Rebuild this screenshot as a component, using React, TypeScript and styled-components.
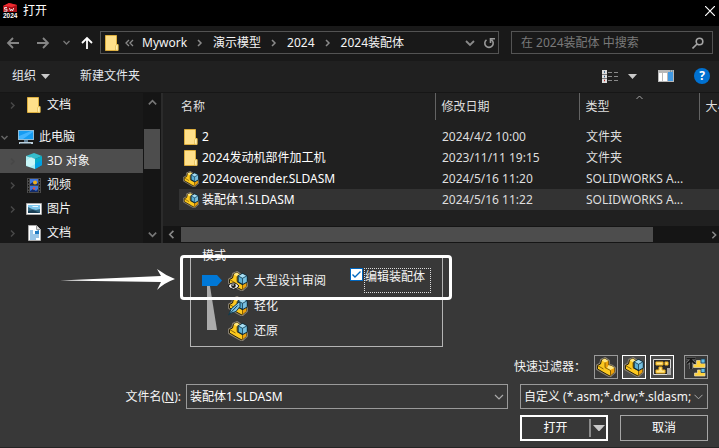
import React, { useState } from "react";
import styled, { createGlobalStyle } from "styled-components";

const Global = createGlobalStyle`
  * { box-sizing: border-box; }
  body { margin: 0; background: #383838; }
  body, button, input, select {
    font-family: "Noto Sans", "Noto Sans CJK SC", sans-serif;
    font-size: 12px;
    line-height: 16px;
    color: #f4f4f4;
  }
  button { background: none; border: 0; padding: 0; }
  svg { display: block; flex: none; }
`;

const Dialog = styled.main`
  display: flex;
  flex-direction: column;
  min-height: 100vh;
  overflow: hidden;
  background: #383838;
  border-bottom: 1px solid #242424;
`;

const TitleBar = styled.header`
  display: flex;
  align-items: center;
  gap: 5px;
  height: 26px;
  padding: 0 4px 5px 2px;
  background: #000;
`;
const Title = styled.h1`
  flex: 1;
  margin: 0;
  font-size: 12px;
  font-weight: 400;
  color: #fff;
`;

const NavBar = styled.nav`
  display: flex;
  align-items: center;
  height: 35px;
  padding: 0 6px 2px;
  background: #191919;
`;
const IconButton = styled.button<{ $w?: number; $h?: number }>`
  display: flex;
  flex: none;
  align-items: center;
  justify-content: center;
  width: ${(p) => p.$w ?? 16}px;
  height: ${(p) => p.$h ?? 20}px;
`;
const NavButtons = styled.div`
  display: flex;
  flex: none;
  align-items: center;
  width: 94px;
`;
const AddressBar = styled.div`
  display: flex;
  flex: 1;
  align-items: center;
  min-width: 0;
  height: 23px;
  padding: 0 0 0 4px;
  border: 1px solid #535353;
`;
const Crumbs = styled.div`
  display: flex;
  flex: 1;
  align-items: center;
  min-width: 0;
  white-space: nowrap;
`;
const Crumb = styled.button`
  color: #f4f4f4;
`;
const SearchBox = styled.label`
  display: flex;
  align-items: center;
  width: 202px;
  height: 23px;
  margin-left: 12px;
  padding: 0 8px 0 9px;
  border: 1px solid #535353;
`;
const SearchInput = styled.input`
  flex: 1;
  min-width: 0;
  padding: 0;
  border: 0;
  outline: 0;
  background: transparent;
  &::placeholder { color: #797979; opacity: 1; }
`;

const Toolbar = styled.div`
  display: flex;
  align-items: center;
  height: 32px;
  padding: 0 8px 1px 12px;
  border-bottom: 1px solid #161616;
  background: #202020;
`;
const ToolButton = styled.button`
  display: flex;
  align-items: center;
  gap: 5px;
  margin-right: 30px;
  color: #e4e8ee;
`;
const Spacer = styled.div`
  flex: 1;
`;

const Browser = styled.div`
  display: grid;
  grid-template-columns: 143px 20px minmax(0, 1fr);
`;
const Tree = styled.nav`
  height: 150px;
  overflow: hidden;
  background: #191919;
`;
const TreeRow = styled.button<{ $selected?: boolean; $root?: boolean; $space?: boolean }>`
  display: flex;
  align-items: center;
  gap: 4px;
  width: 100%;
  height: 24px;
  padding-left: ${(p) => (p.$root ? 0 : 8)}px;
  margin-bottom: ${(p) => (p.$space ? 8 : 0)}px;
  color: #f4f4f4;
  background: ${(p) => (p.$selected ? "#4d4d4d" : "transparent")};
`;
const TreeIcon = styled.span<{ $root?: boolean }>`
  display: flex;
  justify-content: center;
  width: 18px;
  margin-left: 4px;
`;
const VScroll = styled.div`
  display: grid;
  grid-template-rows: 36px 40px 1fr;
  padding: 0 2px 0 1px;
  background: #151515;
  border-right: 2px solid #2b2b2b;
`;
const HScroll = styled.div`
  display: grid;
  grid-template-columns: 18px minmax(0, 472fr) minmax(0, 66fr);
  height: 17px;
  padding: 1px 0;
  background: #151515;
`;
const Thumb = styled.div`
  background: #4d4d4d;
`;
const ScrollEnd = styled.div<{ $align?: string; $items?: string }>`
  display: flex;
  align-items: ${(p) => p.$items ?? "center"};
  justify-content: ${(p) => p.$align ?? "center"};
`;

const Files = styled.section`
  display: flex;
  flex-direction: column;
  justify-content: space-between;
  min-width: 0;
  height: 150px;
  overflow: hidden;
  background: #202020;
`;
const TableWrap = styled.div`
  padding-left: 16px;
`;
const Table = styled.table`
  width: 100%;
  table-layout: fixed;
  border-collapse: collapse;
`;
const Th = styled.th<{ $w?: number }>`
  position: relative;
  width: ${(p) => (p.$w ? `${p.$w}px` : "auto")};
  height: 27px;
  padding: 0 0 0 6px;
  border-right: 1px solid #636363;
  overflow: hidden;
  font-weight: 400;
  text-align: left;
  white-space: nowrap;
  color: #dfdfdf;
  &:first-child { padding-left: 2px; }
  &:last-child { border-right: 0; }
`;
const SortMark = styled.span`
  position: absolute;
  top: 0;
  left: calc(50% - 4px);
`;
const Row = styled.tr<{ $selected?: boolean }>`
  background: ${(p) => (p.$selected ? "#333" : "transparent")};
`;
const Td = styled.td`
  height: 21px;
  padding: 0 0 0 6px;
  overflow: hidden;
  white-space: nowrap;
  color: #dedede;
  &:first-child { padding-left: 3px; color: #fff; }
`;
const TableGap = styled.div`
  height: 6px;
`;
const FileName = styled.span`
  display: flex;
  align-items: center;
  gap: 3px;
`;
const FileIcon = styled.span`
  display: flex;
  justify-content: center;
  width: 17px;
`;

const Options = styled.form`
  display: flex;
  flex-direction: column;
  padding: 5px 11px 6px 0;
`;
const ModeArea = styled.div`
  position: relative;
  width: 253px;
  margin-left: 190px;
`;
const ModeGroup = styled.fieldset`
  display: grid;
  grid-template-columns: 26px 1fr auto;
  grid-template-rows: repeat(3, 25px);
  margin: 0;
  padding: 4px 11px 3px;
  border: 1px solid #b4b4b4;
`;
const Legend = styled.legend`
  padding: 0;
  line-height: 16px;
`;
const SliderCell = styled.div`
  position: relative;
  grid-row: 1 / span 3;
`;
const Slider = styled.input`
  position: absolute;
  inset: 0;
  width: 20px;
  height: 100%;
  margin: 0;
  opacity: 0;
  writing-mode: vertical-lr;
`;
const ModeButton = styled.button`
  display: flex;
  grid-column: 2;
  align-items: center;
  gap: 6px;
  white-space: nowrap;
  color: #f4f4f4;
`;
const CheckLabel = styled.label`
  display: flex;
  gap: 1px;
  height: 25px;
`;
const CheckBox = styled.input`
  appearance: none;
  width: 13px;
  height: 13px;
  margin: 0;
  border: 1px solid #0067c0;
  background: #fff;
  &:checked {
    background: #fff url("data:image/svg+xml,%3Csvg xmlns='http://www.w3.org/2000/svg' viewBox='0 0 11 11'%3E%3Cpath d='M1.5 5.5 4 8 9.5 2.5' fill='none' stroke='%230067c0' stroke-width='1.4'/%3E%3C/svg%3E");
  }
`;
const CheckText = styled.span`
  width: 67px;
  border: 1px dotted #ddd;
`;
const Highlight = styled.div`
  position: absolute;
  top: 7px;
  left: -10px;
  width: 272px;
  height: 45px;
  border: 3px solid #fff;
  border-radius: 4px;
  pointer-events: none;
`;
const Pointer = styled.svg`
  position: absolute;
  top: 20px;
  left: -130px;
  pointer-events: none;
`;

const FilterRow = styled.div`
  display: flex;
  align-items: center;
  justify-content: flex-end;
  gap: 4px;
  margin-top: 8px;
`;
const FilterLabel = styled.span`
  margin-right: 4px;
`;
const FilterButton = styled.button<{ $on?: boolean; $apart?: boolean }>`
  display: flex;
  align-items: center;
  justify-content: center;
  width: 24px;
  height: 24px;
  margin-left: ${(p) => (p.$apart ? 6 : 0)}px;
  border: 1px solid ${(p) => (p.$on ? "#fff" : "#9a9a9a")};
  background: ${(p) => (p.$on ? "#4a4a4a" : "#383838")};
`;
const NameRow = styled.div`
  display: grid;
  grid-template-columns: 186px minmax(0, 1fr) 188px;
  margin-top: 5px;
  align-items: center;
`;
const NameLabel = styled.label`
  padding-right: 5px;
  text-align: right;
`;
const Combo = styled.div`
  display: flex;
  align-items: center;
  height: 25px;
  margin-right: 12px;
  padding: 0 4px 0 3px;
  border: 1px solid #9a9a9a;
`;
const NameInput = styled.input`
  flex: 1;
  min-width: 0;
  padding: 0;
  border: 0;
  outline: 0;
  background: transparent;
  color: #fff;
`;
const TypeSelect = styled.select`
  appearance: none;
  width: 100%;
  height: 25px;
  padding: 0 12px 0 3px;
  border: 1px solid #9a9a9a;
  border-radius: 0;
  background: #383838 url("data:image/svg+xml,%3Csvg xmlns='http://www.w3.org/2000/svg' width='9' height='6'%3E%3Cpath d='M.5 .8 4.5 4.8 8.5 .8' fill='none' stroke='%23aaa'/%3E%3C/svg%3E") no-repeat right 4px center;
`;
const Actions = styled.div`
  display: flex;
  justify-content: flex-end;
  gap: 12px;
  margin-top: 6px;
`;
const Split = styled.div`
  display: flex;
  align-items: center;
  width: 88px;
  height: 26px;
  border: 2px solid #fff;
`;
const OpenButton = styled.button`
  flex: 1;
  height: 18px;
  border-right: 2px solid #8a8a8a;
  color: #fff;
`;
const CancelButton = styled.button`
  width: 88px;
  height: 26px;
  border: 1px solid #a6a6a6;
  color: #fff;
`;

type Dir = "left" | "right" | "up" | "down";
const chevrons: Record<Dir, string> = {
  left: "M7 2 3 6l4 4",
  right: "M4 2l4 4-4 4",
  up: "M2 8l4-4 4 4",
  down: "M2 4l4 4 4-4",
};
const Chevron = ({ dir, color = "#8a8a8a", size = 12, weight = 1.8 }: { dir: Dir; color?: string; size?: number; weight?: number }) => (
  <svg width={size} height={size} viewBox="0 0 12 12" fill="none" stroke={color} strokeWidth={weight}>
    <path d={chevrons[dir]} />
  </svg>
);
const Separator = () => (
  <svg width="26" height="12" viewBox="0 0 26 12" fill="none" stroke="#8a8a8a" strokeWidth="1.5">
    <path d="M11 3l3 3-3 3" />
  </svg>
);
const Caret = ({ w = 9 }: { w?: number }) => (
  <svg width={w} height={(w + 1) / 2} viewBox="0 0 10 5" preserveAspectRatio="none"><path d="M0 0h10L5 5z" fill="#c9c9c9" /></svg>
);
const NavArrow = ({ turn, color }: { turn: number; color: string }) => (
  <svg width="14" height="14" viewBox="0 0 14 14" fill="none" stroke={color} strokeWidth="1.8">
    <path transform={`rotate(${turn} 7 7)`} d="M13 7H2M7 2 2 7l5 5" />
  </svg>
);
const Folder = () => (
  <svg width="14" height="16" viewBox="0 0 14 16">
    <path d="M.5.5h11v9h1.500v6H.5z" fill="#ffe08a" stroke="#dcae3e" />
    <path d="M10.500 15v-4l1-1.500H13v6z" fill="#fff0b2" stroke="#e3b94e" strokeWidth=".7" />
  </svg>
);
const Logo = () => (
  <svg width="16" height="16" viewBox="0 0 16 16">
    <path d="M1 3 7 0l8 2v7H1z" fill="#a80f16" />
    <path d="M1 3 7 0l8 2-5 2z" fill="#ee2a30" />
    <path d="M5 4.500H2.500v1.700H5v2H2M7.500 5l1 3 1-2 1 2 1.200-3" fill="none" stroke="#eee" strokeWidth=".9" />
    <path d="M0 9h16v7H0z" fill="#000" />
    <text x="1" y="15" fontSize="6.500" fontWeight="700" fontFamily="Liberation Sans" fill="#fff">2024</text>
  </svg>
);
const Computer = () => (
  <svg width="16" height="16" viewBox="0 0 16 16">
    <path d="M0 1h16v10H0z" fill="#8fbdd9" /><path d="M1 2h14v8H1z" fill="#159cf2" />
    <path d="M1 10V7l12-5h2v1L5 10z" fill="#42b5ff" />
    <path d="M6 11h4v2H6z" fill="#5f7f97" /><path d="M1 13h14v2H1z" fill="#bdd0dc" /><path d="M2 14h11v1H2z" fill="#667984" />
  </svg>
);
const Cube = () => (
  <svg width="16" height="16" viewBox="0 0 16 16">
    <path d="M8 0l8 3-7 3-9-3z" fill="#35bdcc" /><path d="M0 3l9 3v10l-9-3z" fill="#a6edf2" />
    <path d="M9 6l7-3v9l-7 4z" fill="#07aec8" /><path d="M0 8l5-4 4 2v5l-5 3-4-2z" fill="#d8fafa" opacity=".7" />
    <path d="M9 11l7-4v5l-7 4z" fill="#00a0e4" />
  </svg>
);
const Film = () => (
  <svg width="14" height="15" viewBox="0 0 14 15">
    <path d="M0 0h14v15H0z" fill="#4b4b4b" />
    <path d="M1.500 1v14M12.500 1v14" stroke="#111" strokeDasharray="1.500 1.500" />
    <path d="M3 1h8v6H3zM3 8h8v6H3z" fill="#3f76df" />
    <path d="M3 6l3-2 3 2 2-1v2H3zM3 13l3-2 3 2 2-2v3H3z" fill="#152c67" />
    <circle cx="8" cy="4.500" r="2" fill="#f0af1a" /><circle cx="7" cy="10.500" r="1.200" fill="#df4f42" />
  </svg>
);
const Picture = () => (
  <svg width="16" height="12" viewBox="0 0 16 12">
    <path d="M.5.5h15v11H.5z" fill="#fff" stroke="#aaa" /><path d="M2 2h12v8H2z" fill="#7fc8ee" />
    <path d="M2 4l4 2 4 1 4-1v4H2z" fill="#376a84" /><path d="M2 8l5-1 7 3H2z" fill="#1b3f55" />
    <path d="M6 3h6v1H7z" fill="#e8f7ff" />
  </svg>
);
const Doc = () => (
  <svg width="13" height="16" viewBox="0 0 13 16">
    <path d="M.5.5h8l4 4v11H.5z" fill="#fff" stroke="#aaa" /><path d="M8.500.5v4h4" fill="#ddd" stroke="#999" />
    <path d="M2 6h3M2 8h3M2 10h9M2 12h9M2 14h6" stroke="#348bd1" /><path d="M7 9V6h1.500l2.500-1v4z" fill="#227bc3" />
  </svg>
);

type Mark = "eye" | "feather";
const partOutline = "M1.500 8.500 4.500 7 5.500 3 9 1.500 12.500 4V8l3.500 1 2.500 2v4L14 19l-3-1.500-9.500-5.500z";
const Part = ({ cube, mark, size = 20 }: { cube?: boolean; mark?: Mark; size?: number }) => (
  <svg width={size} height={size} viewBox="0 0 20 20" strokeLinejoin="round">
    <path d={partOutline} fill="#8d8577" stroke="#8d8577" strokeWidth="2.800" />
    <path d={partOutline} fill="#fcc81f" stroke="#2a2208" strokeWidth="1" />
    <path d="M5.500 3 9 1.500 12.500 4 9 5.500zM12.500 8l3.500 1 2.500 2-4 2-3.500-2z" fill="#ffe680" />
    <path d="M9 5.500 12.500 4v4L11 10.500l-2 1zM14.500 13l4-2v4L14 19z" fill="#eda20c" />
    <path d="M9 5.500v5l5.500 3V18M1.500 8.500l6 3.500" fill="none" stroke="#6b4c00" strokeWidth=".8" />
    {cube && (
      <>
        <path d="M10 5l4.500-2.500L19 5v6l-4.500 2.500L10 11z" fill="#5aaed4" stroke="#0c2937" strokeWidth="1.300" />
        <path d="M10.500 5l4-2.200L18.500 5l-4 2z" fill="#a6dcf1" />
        <path d="M14.500 7.300 18.700 5v5.700L14.500 13z" fill="#77bfdf" />
        <path d="M10.300 5l4.200 2.300L18.700 5M14.500 7.300V13" fill="none" stroke="#143c50" strokeWidth=".8" />
      </>
    )}
    {mark === "eye" && (
      <>
        <path d="M0 15q5.500-6.500 11 0-5.500 6.500-11 0z" fill="#f2f2f2" stroke="#1c1c1c" />
        <circle cx="5.500" cy="14.700" r="2.300" fill="#1c1c1c" /><circle cx="5" cy="14" r=".8" fill="#fff" />
      </>
    )}
    {mark === "feather" && (
      <>
        <path d="M1 18.500 3 13l8-7 1 .5v4l-4 5-4.500 1.500z" fill="#7cc4e6" stroke="#12394b" />
        <path d="M0 19.500 9.500 9.500" stroke="#12394b" />
      </>
    )}
  </svg>
);
const Drawing = () => (
  <svg width="20" height="20" viewBox="0 0 20 20">
    <path d="M1.500 2.500h17v15h-17z" fill="#2b2b2b" stroke="#d8d8d8" />
    <path d="M4 5h7v3H4zM13 5h3v3h-3zM7 10h3v3h3v3H4v-3h3z" fill="#ffe58a" stroke="#f0b31a" />
    <path d="M15 11h4v7h-4z" fill="#a9a9a9" />
  </svg>
);
const TopLevel = () => (
  <svg width="20" height="20" viewBox="0 0 20 20">
    <path d="M.5 1.500h9M1 6.500 5 3l4 3.500M5 3v9" fill="none" stroke="#8a8a8a" strokeWidth="3" />
    <path d="M.5 1.500h9M1 6.500 5 3l4 3.500M5 3v9" fill="none" stroke="#171717" strokeWidth="1.800" />
    <path d="M10.500 3.500h4v3h4.500v4H7.500v-3h3zM11.500 13h3.500v2.500h4V19H8.500v-3h3z" fill="#ffd23b" stroke="#e8dcb8" strokeWidth=".7" />
    <path d="M15 2h4v4h-4zM15 11.500h4v4h-4z" fill="#64bbe6" stroke="#1c4358" strokeWidth=".8" />
  </svg>
);

const places = [
  { name: "文档", icon: <Folder />, space: true },
  { name: "此电脑", icon: <Computer />, root: true },
  { name: "3D 对象", icon: <Cube />, selected: true },
  { name: "视频", icon: <Film /> },
  { name: "图片", icon: <Picture /> },
  { name: "文档", icon: <Doc /> },
];
const files = [
  { name: "2", date: "2024/4/2 10:00", type: "文件夹", folder: true },
  { name: "2024发动机部件加工机", date: "2023/11/11 19:15", type: "文件夹", folder: true },
  { name: "2024overender.SLDASM", date: "2024/5/16 11:20", type: "SOLIDWORKS A..." },
  { name: "装配体1.SLDASM", date: "2024/5/16 11:22", type: "SOLIDWORKS A...", selected: true },
];
const modes: { name: string; mark?: Mark }[] = [
  { name: "大型设计审阅", mark: "eye" },
  { name: "轻化", mark: "feather" },
  { name: "还原" },
];
const crumbs = ["Mywork", "演示模型", "2024", "2024装配体"];

export default function App() {
  const [mode, setMode] = useState(0);
  const [edit, setEdit] = useState(true);
  const [fileName, setFileName] = useState("装配体1.SLDASM");
  return (
    <Dialog>
      <Global />
      <TitleBar>
        <Logo />
        <Title>打开</Title>
        <IconButton $w={10} aria-label="关闭">
          <svg width="10" height="10" viewBox="0 0 10 10" stroke="#fff" strokeWidth="1.200"><path d="M0 0l10 10M10 0 0 10" /></svg>
        </IconButton>
      </TitleBar>
      <NavBar>
        <NavButtons>
          <IconButton $w={14} aria-label="后退"><NavArrow turn={0} color="#858585" /></IconButton>
          <IconButton $w={46} aria-label="前进"><NavArrow turn={180} color="#858585" /></IconButton>
          <IconButton $w={1} aria-label="最近"><Chevron dir="down" size={9} color="#777" /></IconButton>
          <IconButton $w={40} aria-label="上移"><NavArrow turn={90} color="#fff" /></IconButton>
        </NavButtons>
        <AddressBar>
          <Crumbs>
            <Folder />
            <svg width="23" height="12" viewBox="0 0 23 12" fill="none" stroke="#8a8a8a" strokeWidth="1.300"><path d="M10 3 7 6l3 3M14 3l-3 3 3 3" /></svg>
            {crumbs.map((c, i) => (
              <React.Fragment key={c}>
                {i > 0 && <Separator />}
                <Crumb>{c}</Crumb>
              </React.Fragment>
            ))}
          </Crumbs>
          <IconButton $w={20} aria-label="历史"><Chevron dir="down" /></IconButton>
          <IconButton $w={18} aria-label="刷新">
            <svg width="12" height="12" viewBox="0 0 12 12" fill="none" stroke="#999" strokeWidth="1.600"><path d="M3.500 2.800A4.200 4.200 0 1 0 8.500 2.800M7.500 6V1.800H12" /></svg>
          </IconButton>
        </AddressBar>
        <SearchBox>
          <SearchInput aria-label="搜索" placeholder="在 2024装配体 中搜索" />
          <svg width="12" height="12" viewBox="0 0 12 12" fill="none" stroke="#a5a5a5" strokeWidth="1.600"><circle cx="7.500" cy="4.500" r="3.300" /><path d="M5 7 .5 11.500" /></svg>
        </SearchBox>
      </NavBar>
      <Toolbar>
        <ToolButton>组织 <Caret /></ToolButton>
        <ToolButton>新建文件夹</ToolButton>
        <Spacer />
        <IconButton $w={29} aria-label="视图">
          <svg width="17" height="13" viewBox="0 0 17 13">
            <path d="M0 0h5v13H0z" fill="#ddd" /><path d="M0 4.500h5M0 8.500h5" stroke="#777" />
            <path d="M2 2h1M2 6.500h1" stroke="#27577f" strokeWidth="1.500" /><path d="M2 10.500h1" stroke="#b22" strokeWidth="1.500" />
            <path d="M6 2.500h11M6 6.500h11M6 10.500h11" stroke="#8a8a8a" strokeDasharray="4 2" />
          </svg>
        </IconButton>
        <IconButton $w={14} aria-label="更改视图"><Caret /></IconButton>
        <IconButton $w={54} aria-label="预览窗格">
          <svg width="16" height="12" viewBox="0 0 16 12"><path d="M0 0h16v12H0z" fill="#b8b8b8" /><path d="M1 3h3v8H1zM5 3h4v8H5z" fill="#fff" /><path d="M10 2h5v9h-5z" fill="#4199e2" /><path d="M12 1h3" stroke="#31729d" strokeDasharray="1 1" /></svg>
        </IconButton>
        <IconButton $w={18} aria-label="帮助">
          <svg width="16" height="16" viewBox="0 0 16 16"><circle cx="8" cy="8" r="8" fill="#0071d1" /><text x="8" y="12" textAnchor="middle" fontSize="12" fontWeight="700" fontFamily="Noto Sans" fill="#fff">?</text></svg>
        </IconButton>
      </Toolbar>
      <Browser>
        <Tree>
          {places.map((p, i) => (
            <TreeRow key={i} $selected={p.selected} $root={p.root} $space={p.space}>
              <Chevron dir={p.root ? "down" : "right"} size={9} color={p.root ? "#666" : "#474747"} weight={2} />
              <TreeIcon>{p.icon}</TreeIcon>
              {p.name}
            </TreeRow>
          ))}
        </Tree>
        <VScroll>
          <ScrollEnd $items="flex-start"><IconButton $h={18} aria-label="向上滚动"><Chevron dir="up" size={11} color="#777" /></IconButton></ScrollEnd>
          <Thumb />
          <ScrollEnd $items="flex-end"><IconButton $h={18} aria-label="向下滚动"><Chevron dir="down" size={11} color="#777" /></IconButton></ScrollEnd>
        </VScroll>
        <Files>
          <TableWrap>
            <Table>
              <thead>
                <tr>
                  <Th>名称</Th>
                  <Th $w={144}>修改日期</Th>
                  <Th $w={120}>类型<SortMark><Chevron dir="up" size={9} color="#aaa" weight={1.3} /></SortMark></Th>
                  <Th $w={20}>大小</Th>
                </tr>
              </thead>
            </Table>
            <TableGap />
            <Table aria-label="文件">
              <colgroup><col /><col width="144" /><col width="139" /></colgroup>
              <tbody>
                {files.map((f) => (
                  <Row key={f.name} $selected={f.selected}>
                    <Td><FileName><FileIcon>{f.folder ? <Folder /> : <Part cube size={16} />}</FileIcon>{f.name}</FileName></Td>
                    <Td>{f.date}</Td>
                    <Td>{f.type}</Td>
                  </Row>
                ))}
              </tbody>
            </Table>
          </TableWrap>
          <HScroll>
            <ScrollEnd><Chevron dir="left" size={11} color="#888" /></ScrollEnd>
            <Thumb />
            <ScrollEnd $align="flex-end"><Chevron dir="right" size={10} color="#888" /></ScrollEnd>
          </HScroll>
        </Files>
      </Browser>
      <Options onSubmit={(e) => e.preventDefault()}>
        <ModeArea>
          <ModeGroup>
            <Legend>模式</Legend>
            <SliderCell>
              <svg width="20" height="75" viewBox="0 0 20 75">
                <path d="M5 12h2l8 50H5z" fill="#ababab" />
                <path transform={`translate(0 ${mode * 25})`} d="M0 7h15l5 5.500-5 5.500H0z" fill="#0078d7" />
              </svg>
              <Slider type="range" min={0} max={2} value={mode} aria-label="模式" onChange={(e) => setMode(Number(e.target.value))} />
            </SliderCell>
            {modes.map((m, i) => (
              <React.Fragment key={m.name}>
                <ModeButton type="button" onClick={() => setMode(i)}><Part cube mark={m.mark} />{m.name}</ModeButton>
                {i === 0 && (
                  <CheckLabel>
                    <CheckBox type="checkbox" checked={edit} onChange={(e) => setEdit(e.target.checked)} />
                    <CheckText>编辑装配体</CheckText>
                  </CheckLabel>
                )}
              </React.Fragment>
            ))}
          </ModeGroup>
          <Highlight />
          <Pointer width="115" height="24" viewBox="0 0 115 24"><path d="M0 12.500 101 8 97 1q8 6 18 10-11 4-18 11l4-8z" fill="#fff" /></Pointer>
        </ModeArea>
        <FilterRow>
          <FilterLabel>快速过滤器：</FilterLabel>
          <FilterButton type="button" aria-label="零件"><Part /></FilterButton>
          <FilterButton type="button" $on aria-label="装配体"><Part cube /></FilterButton>
          <FilterButton type="button" $on aria-label="工程图"><Drawing /></FilterButton>
          <FilterButton type="button" $apart aria-label="顶级装配体"><TopLevel /></FilterButton>
        </FilterRow>
        <NameRow>
          <NameLabel htmlFor="file-name">文件名(<u>N</u>):</NameLabel>
          <Combo>
            <NameInput id="file-name" value={fileName} onChange={(e) => setFileName(e.target.value)} />
            <IconButton type="button" $w={9} aria-label="文件名列表"><Chevron dir="down" color="#aaa" weight={1.2} /></IconButton>
          </Combo>
          <TypeSelect aria-label="文件类型"><option>自定义 (*.asm;*.drw;*.sldasm;</option></TypeSelect>
        </NameRow>
        <Actions>
          <Split>
            <OpenButton type="submit">打开</OpenButton>
            <IconButton type="button" $w={15} aria-label="打开方式"><Caret w={12} /></IconButton>
          </Split>
          <CancelButton type="button">取消</CancelButton>
        </Actions>
      </Options>
    </Dialog>
  );
}
